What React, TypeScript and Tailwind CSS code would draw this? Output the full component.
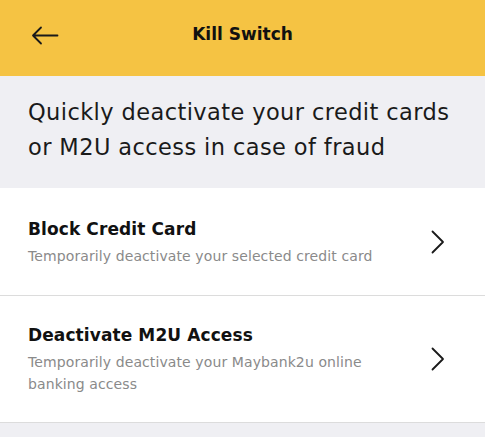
type Item = { title: string; desc: string };

const items: Item[] = [
  { title: "Block Credit Card", desc: "Temporarily deactivate your selected credit card" },
  { title: "Deactivate M2U Access", desc: "Temporarily deactivate your Maybank2u online banking access" },
];

const Chevron = () => (
  <svg width="14" height="24" viewBox="0 0 14 24" fill="none" className="shrink-0">
    <path d="M1.5 1.5 L12 12 L1.5 22.5" stroke="#1a1a1a" strokeWidth="1.8" strokeLinecap="round" strokeLinejoin="round" />
  </svg>
);

export default function App() {
  return (
    <div className="w-[485px] h-[437px] bg-[#efeff3] overflow-hidden font-['DejaVu_Sans',sans-serif]">
      <header className="h-[76px] bg-[#f5c343] flex items-center relative pb-[6px]">
        <button className="absolute left-[31px] top-[26px] w-[28px] h-[19px]">
          <svg width="28" height="19" viewBox="0 0 28 19" fill="none">
            <path d="M26.5 9.5 H2 M10 1.5 L2 9.5 L10 17.5" stroke="#1a1a1a" strokeWidth="1.8" strokeLinecap="round" strokeLinejoin="round" />
          </svg>
        </button>
        <h1 className="w-full text-center text-[17px] font-bold text-[#111]">Kill Switch</h1>
      </header>

      <div className="h-[112px] px-[28px] pt-[19px]">
        <p className="text-[22.5px] leading-[35px] text-[#1a1a1a] tracking-[0.4px]">
          Quickly deactivate your credit cards or M2U access in case of fraud
        </p>
      </div>

      <div className="bg-white">
        {items.map((item, i) => (
          <div
            key={item.title}
            className={`flex items-center justify-between pl-[28px] pr-[40px] border-b border-[#dcdcdc] ${i === 0 ? "h-[108px]" : "h-[127px]"}`}
          >
            <div className="max-w-[360px]">
              <div className="text-[17px] font-bold text-[#111] leading-[24px] tracking-[0.1px]">{item.title}</div>
              <div className="mt-[4px] text-[14px] leading-[22px] text-[#8a8a8a] tracking-[0.1px]">{item.desc}</div>
            </div>
            <Chevron />
          </div>
        ))}
      </div>
    </div>
  );
}
